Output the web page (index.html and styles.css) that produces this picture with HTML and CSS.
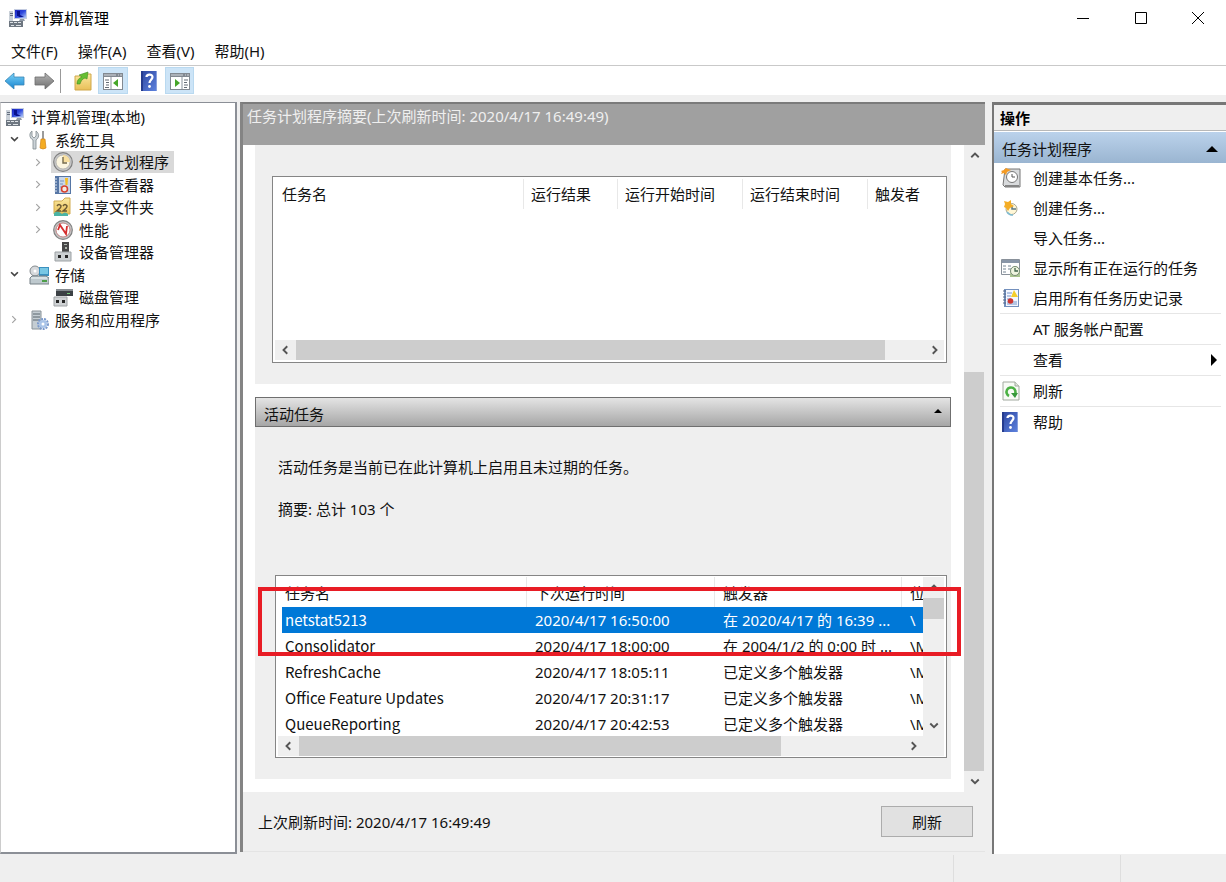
FILE: index.html
```html
<!DOCTYPE html>
<html lang="zh-CN">
<head>
<meta charset="utf-8">
<title>计算机管理</title>
<link rel="stylesheet" href="styles.css">
</head>
<body>
<svg class="defs" aria-hidden="true">
  <defs>
    <linearGradient id="blueArrow" x1="0" y1="0" x2="0" y2="1"><stop offset="0" stop-color="#7cd3f7"/><stop offset="1" stop-color="#1583cf"/></linearGradient>
    <linearGradient id="greyArrow" x1="0" y1="0" x2="0" y2="1"><stop offset="0" stop-color="#b5b5b5"/><stop offset="1" stop-color="#6f6f6f"/></linearGradient>
    <linearGradient id="screen" x1="0" y1="0" x2="1" y2="1"><stop offset="0" stop-color="#1a24c0"/><stop offset=".5" stop-color="#2f49dd"/><stop offset="1" stop-color="#b8d0f8"/></linearGradient>
    <linearGradient id="book" x1="0" y1="0" x2="1" y2="1"><stop offset="0" stop-color="#2c459f"/><stop offset="1" stop-color="#5e83df"/></linearGradient>
    <linearGradient id="folder" x1="0" y1="0" x2="0" y2="1"><stop offset="0" stop-color="#fbe9a0"/><stop offset="1" stop-color="#e9bf58"/></linearGradient>
  </defs>
  <symbol id="computer" viewBox="0 0 20 20">
    <path d="M6 1h13v10H6z" fill="#c3cbe0"/><path d="M7 2h11v8H7z" fill="url(#screen)"/><path d="M9 3l3 0v5h-3zM12 7l4 2h-6z" fill="#0a128e"/><path d="M12 11h4l1 2h-6z" fill="#8f98a5"/>
    <path d="M1 3h4v11H1z" fill="#c9d0d8"/><path d="M2 5h3v1H2zM2 7h3v1H2z" fill="#657080"/>
    <path d="M1 13h14v6H1z" fill="#6d7680"/><path d="M2 14h3v1H2zM6 14h3v1H6zM10 14h3v1h-3zM3 17h3v1H3zM8 17h5v1H8z" fill="#dce1e5"/>
  </symbol>
  <symbol id="help" viewBox="0 0 20 20">
    <path d="M1 0h16v20H1z" fill="url(#book)"/><path d="M1 0h2v20H1z" fill="#263c8e"/><path d="M16 0h1v20h-1z" fill="#889fdd"/>
    <path d="M6.500 6c0-3 6-3.500 6 0 0 2.500-3 3-3 6" fill="none" stroke="#fff" stroke-width="2.200"/><circle cx="9.500" cy="15.500" r="1.400" fill="#fff"/>
  </symbol>
  <symbol id="clock" viewBox="0 0 20 20">
    <circle cx="10" cy="10" r="9.300" fill="#c9c9c9" stroke="#808080" stroke-width="1.200"/><circle cx="10" cy="10" r="7" fill="#fbf5e0" stroke="#9b9b9b" stroke-width=".6"/><path d="M10 10V3a7 7 0 0 1 7 7z" fill="#f8dfa0"/><path d="M10 5v6h4" fill="none" stroke="#756a4b" stroke-width="1.400"/>
  </symbol>
  <symbol id="log" viewBox="0 0 20 20">
    <path d="M3 1h15v18H3z" fill="#7390bd"/><path d="M5 2h12v16H5z" fill="#f4f7ff"/><path d="M6 5h5M6 8h4M6 11h4M6 14h10M6 16h10" stroke="#7494ca"/><path d="M13 2l4 7h-7z" fill="#f4cd2b"/><circle cx="9.500" cy="13" r="2.800" fill="#ce3632"/><path d="M2 3h3M2 6h3M2 9h3M2 12h3M2 15h3" stroke="#546687"/>
  </symbol>
  <symbol id="event" viewBox="0 0 20 20">
    <path d="M2 1h16v18H2z" fill="#5676a5"/><path d="M6 2h11v16H6z" fill="#c9d7ea"/><path d="M7 6h4M7 9h3M7 12h2" stroke="#7895bd"/><path d="M12 3h3l-.5 7h-2z" fill="#f5bc22"/><circle cx="11.500" cy="14" r="3" fill="#f4e9e4" stroke="#d6422e" stroke-width="1.600"/><path d="M1 4h3M1 7h3M1 10h3M1 13h3M1 16h3" stroke="#dce4ef"/>
  </symbol>
  <symbol id="device" viewBox="0 0 20 20">
    <path d="M9 0h7v11H9z" fill="#474747"/><path d="M11 2h3v1h-3zM12 5h2v2h-2z" fill="#aeb6ac"/><path d="M2 10h16v9H2z" fill="#ccd0d2" stroke="#9da2a5"/><path d="M5 13h3v3H5zM12 13h3v3h-3z" fill="#252525"/>
  </symbol>
</svg>

<header class="titlebar">
  <svg class="icon"><use href="#computer"/></svg>
  <h1>计算机管理</h1>
  <div class="window-buttons">
    <button aria-label="最小化"><svg viewBox="0 0 12 12"><path d="M0 6.500h12"/></svg></button>
    <button aria-label="最大化"><svg viewBox="0 0 12 12"><path d="M.5.5h11v11H.5z"/></svg></button>
    <button aria-label="关闭"><svg viewBox="0 0 12 12"><path d="M0 0l12 12M12 0L0 12"/></svg></button>
  </div>
</header>

<nav class="menubar">
  <button>文件(F)</button><button>操作(A)</button><button>查看(V)</button><button>帮助(H)</button>
</nav>

<div class="toolbar">
  <button aria-label="后退"><svg class="icon" viewBox="0 0 20 20"><path d="M0 10l9-8v4h10v8H9v4z" fill="url(#blueArrow)" stroke="#3a86b5" stroke-width=".8"/></svg></button>
  <button aria-label="前进"><svg class="icon" viewBox="0 0 20 20"><path d="M20 10l-9-8v4H1v8h10v4z" fill="url(#greyArrow)" stroke="#6c6c6c" stroke-width=".8"/></svg></button>
  <span class="divider"></span>
  <button class="up" aria-label="上移一级"><svg class="icon" viewBox="0 0 20 20"><path d="M2 5h7l2-2h7v16H2z" fill="url(#folder)" stroke="#d0a74b"/><path d="M4 13c0-4 2-6 5-7L6 4l9-3-1 7-2-1c-3 1-4 3-5 6z" fill="#67bf32" stroke="#438e23" stroke-width=".6"/></svg></button>
  <button class="pressed" aria-label="显示/隐藏控制台树"><svg class="icon" viewBox="0 0 20 20"><path d="M0 2h20v17H0z" fill="#828991"/><path d="M1 6h18v12H1z" fill="#fff"/><path d="M1 4h12M15 4h1M17 4h2" stroke="#d4d8de"/><path d="M2 9h4M3 11.500h3M3 14h3M2 16.500h4" stroke="#646d76"/><path d="M8 6v12" stroke="#8b949d"/><path d="M15 8v8l-5-4z" fill="#46a629"/></svg></button>
  <button class="help-button" aria-label="帮助"><svg class="icon"><use href="#help"/></svg></button>
  <button class="pressed" aria-label="显示/隐藏操作窗格"><svg class="icon" viewBox="0 0 20 20"><path d="M0 2h20v17H0z" fill="#828991"/><path d="M1 6h18v12H1z" fill="#fff"/><path d="M1 4h12M15 4h1M17 4h2" stroke="#d4d8de"/><path d="M14 9h4M14 11.500h3M14 14h4M14 16.500h3" stroke="#646d76"/><path d="M12 6v12" stroke="#8b949d"/><path d="M5 8v8l5-4z" fill="#46a629"/></svg></button>
</div>

<main class="workspace">
  <aside class="tree">
    <ul>
      <li class="root"><svg class="icon"><use href="#computer"/></svg><span>计算机管理(本地)</span></li>
      <li class="level1"><svg class="twisty open" viewBox="0 0 8 8"><path d="M1 2l3 3 3-3"/></svg><svg class="icon" viewBox="0 0 20 20"><path d="M3 1v5l2 2 2-2V1c4 3 3 7 0 9v9H4v-9C0 8 0 3 3 1z" fill="#ccd3d8" stroke="#818b91" stroke-width=".8"/><path d="M13 1h2v9h-2z" fill="#9b9b9b"/><path d="M12 9h4l1 9q-3 2-6 0z" fill="#f4ac22" stroke="#d28316" stroke-width=".7"/></svg><span>系统工具</span></li>
      <li class="level2 selected"><svg class="twisty" viewBox="0 0 8 8"><path d="M2 1l3 3-3 3"/></svg><span class="label"><svg class="icon"><use href="#clock"/></svg><span>任务计划程序</span></span></li>
      <li class="level2"><svg class="twisty" viewBox="0 0 8 8"><path d="M2 1l3 3-3 3"/></svg><span class="label"><svg class="icon"><use href="#event"/></svg><span>事件查看器</span></span></li>
      <li class="level2"><svg class="twisty" viewBox="0 0 8 8"><path d="M2 1l3 3-3 3"/></svg><span class="label"><svg class="icon" viewBox="0 0 20 20"><path d="M1 4h8l3-3h5v16H1z" fill="url(#folder)" stroke="#d2ab50"/><path d="M4 9q2-3 4 0 0 2-4 5h4M10 9q2-3 4 0 0 2-4 5h4" stroke="#6b5932" stroke-width="1.500" fill="none"/><path d="M1 16q4-3 8 1 3-3 6 0v2H1z" fill="#4bb3a4"/></svg><span>共享文件夹</span></span></li>
      <li class="level2"><svg class="twisty" viewBox="0 0 8 8"><path d="M2 1l3 3-3 3"/></svg><span class="label"><svg class="icon" viewBox="0 0 20 20"><circle cx="10" cy="10" r="9.300" fill="#c5c5c5" stroke="#808080" stroke-width="1.200"/><circle cx="10" cy="10" r="7" fill="#fff" stroke="#ba6d6d" stroke-width=".8"/><path d="M5 10l2-5 6 9 1-8" fill="none" stroke="#d62e2e" stroke-width="1.800"/></svg><span>性能</span></span></li>
      <li class="level2"><span class="twisty"></span><span class="label"><svg class="icon"><use href="#device"/></svg><span>设备管理器</span></span></li>
      <li class="level1"><svg class="twisty open" viewBox="0 0 8 8"><path d="M1 2l3 3 3-3"/></svg><svg class="icon" viewBox="0 0 20 20"><circle cx="6" cy="6" r="5" fill="#d6d9dc" stroke="#858b8e"/><circle cx="6" cy="6" r="1.500" fill="#fff"/><path d="M10 2h10v9H10z" fill="#3a90bf"/><path d="M11 3h8v6h-8z" fill="#78c7e4"/><path d="M1 13l2-2h14l3 2v6H1z" fill="#bec9ce" stroke="#768187"/><path d="M2 13h16" stroke="#f4fafa"/><path d="M13 15h5v2h-5z" fill="#4e9e48"/></svg><span>存储</span></li>
      <li class="level2"><span class="twisty"></span><span class="label"><svg class="icon" viewBox="0 0 20 20"><path d="M3 2h17v7H3z" fill="#3c4145"/><path d="M3 2h17v2H3z" fill="#858b90"/><path d="M14 6h3v1h-3z" fill="#76cb78"/><path d="M1 10h13v9H1z" fill="#cfd2d4" stroke="#9fa3a6"/><path d="M3 13h3v3H3zM9 13h3v3H9z" fill="#252525"/></svg><span>磁盘管理</span></span></li>
      <li class="level1"><svg class="twisty" viewBox="0 0 8 8"><path d="M2 1l3 3-3 3"/></svg><svg class="icon" viewBox="0 0 20 20"><path d="M3 1h9v18H3z" fill="#c4cdd3" stroke="#899298"/><path d="M4 4h7M4 7h7M4 10h7" stroke="#58646c"/><circle cx="14" cy="14" r="5" fill="none" stroke="#7a99cb" stroke-width="2" stroke-dasharray="2 1"/><circle cx="14" cy="14" r="4" fill="#a9c4e8"/><circle cx="14" cy="14" r="1.500" fill="#fff"/></svg><span>服务和应用程序</span></li>
    </ul>
  </aside>

  <section class="summary">
    <h2>任务计划程序摘要(上次刷新时间: 2020/4/17 16:49:49)</h2>
    <div class="scroll-area">
      <div class="panels">
        <div class="panel status-panel">
          <div class="list status-list">
            <table>
              <colgroup><col class="w-name"><col class="w-result"><col class="w-time"><col class="w-time"><col></colgroup>
              <thead><tr><th>任务名</th><th>运行结果</th><th>运行开始时间</th><th>运行结束时间</th><th>触发者</th></tr></thead>
            </table>
            <div class="hscroll"><button aria-label="向左"><svg viewBox="0 0 8 8"><path d="M5 1L2 4l3 3"/></svg></button><div class="track"><div class="thumb wide"></div></div><button aria-label="向右"><svg viewBox="0 0 8 8"><path d="M3 1l3 3-3 3"/></svg></button></div>
          </div>
        </div>
        <button class="band"><span>活动任务</span><svg viewBox="0 0 8 4"><path d="M0 4l4-4 4 4z"/></svg></button>
        <div class="panel active-panel">
          <p>活动任务是当前已在此计算机上启用且未过期的任务。</p>
          <p>摘要: 总计 103 个</p>
          <div class="marked">
            <div class="list active-list">
              <div class="rows">
                <table>
                  <colgroup><col class="a-name"><col class="a-next"><col class="a-trigger"><col></colgroup>
                  <thead><tr><th>任务名</th><th>下次运行时间</th><th>触发器</th><th>位</th></tr></thead>
                  <tbody>
                    <tr class="current"><td>netstat5213</td><td>2020/4/17 16:50:00</td><td>在 2020/4/17 的 16:39 ...</td><td>\</td></tr>
                    <tr><td>Consolidator</td><td>2020/4/17 18:00:00</td><td>在 2004/1/2 的 0:00 时 ...</td><td>\M</td></tr>
                    <tr><td>RefreshCache</td><td>2020/4/17 18:05:11</td><td>已定义多个触发器</td><td>\M</td></tr>
                    <tr><td>Office Feature Updates</td><td>2020/4/17 20:31:17</td><td>已定义多个触发器</td><td>\M</td></tr>
                    <tr><td>QueueReporting</td><td>2020/4/17 20:42:53</td><td>已定义多个触发器</td><td>\M</td></tr>
                  </tbody>
                </table>
                <div class="vscroll"><button aria-label="向上"><svg viewBox="0 0 8 8"><path d="M1 5l3-3 3 3"/></svg></button><div class="track"><div class="thumb"></div></div><button aria-label="向下"><svg viewBox="0 0 8 8"><path d="M1 2l3 3 3-3"/></svg></button></div>
              </div>
              <div class="hscroll cornered"><button aria-label="向左"><svg viewBox="0 0 8 8"><path d="M5 1L2 4l3 3"/></svg></button><div class="track"><div class="thumb"></div></div><button aria-label="向右"><svg viewBox="0 0 8 8"><path d="M3 1l3 3-3 3"/></svg></button></div>
            </div>
            <div class="highlight"></div>
          </div>
        </div>
      </div>
      <div class="vscroll page-scroll"><button aria-label="向上"><svg viewBox="0 0 8 8"><path d="M1 5l3-3 3 3"/></svg></button><div class="track"><div class="thumb"></div></div><button aria-label="向下"><svg viewBox="0 0 8 8"><path d="M1 2l3 3 3-3"/></svg></button></div>
    </div>
    <footer><span>上次刷新时间: 2020/4/17 16:49:49</span><button class="refresh">刷新</button></footer>
  </section>

  <aside class="actions">
    <h2>操作</h2>
    <button class="group"><span>任务计划程序</span><svg viewBox="0 0 12 6"><path d="M0 6l6-6 6 6z"/></svg></button>
    <ul>
      <li><button><svg class="icon" viewBox="0 0 20 20"><path d="M4 1h15v18H4l-2-2z" fill="#d9dbdd" stroke="#777"/><path d="M4 17h14v2H4z" fill="#858585"/><circle cx="11" cy="9" r="5.500" fill="#fff" stroke="#777"/><path d="M11 6v3h3" stroke="#555" fill="none"/><path d="M0 3l3-1 2-2 2 1 3 1-4 2-1 3-2-2-3 1 1-2z" fill="#f59b23"/></svg><span>创建基本任务...</span></button></li>
      <li><button><svg class="icon" viewBox="0 0 20 20"><circle cx="10.500" cy="11" r="5.500" fill="#fff7d7" stroke="#aaa78f"/><path d="M11 8v3h4" stroke="#5c7884" stroke-width="1.500" fill="none"/><path d="M3 3l4 1 3-2v4l3 2-4 2-2 3-2-3-2-1 1-3z" fill="#f4ad26"/><path d="M6 14q2 3 6 3" stroke="#7fbad0" stroke-width="1.500" fill="none"/></svg><span>创建任务...</span></button></li>
      <li><button><span class="icon"></span><span>导入任务...</span></button></li>
      <li><button><svg class="icon" viewBox="0 0 20 20"><path d="M.5 1.500h18v15H.5z" fill="#fff" stroke="#89919a"/><path d="M1 2h17v3H1z" fill="#8996a8"/><path d="M2 8h3M7 8h3M2 11h3M7 11h3M2 14h3" stroke="#758493"/><path d="M9 19q0-11 5-11t5 11z" fill="#a9c48f"/><circle cx="14" cy="13" r="4.500" fill="#eff5df" stroke="#788c76"/><path d="M14 10v3h3" fill="none" stroke="#40634c" stroke-width="1.300"/></svg><span>显示所有正在运行的任务</span></button></li>
      <li><button><svg class="icon"><use href="#log"/></svg><span>启用所有任务历史记录</span></button></li>
      <li class="ruled"><button><span class="icon"></span><span>AT 服务帐户配置</span></button></li>
      <li class="ruled"><button><span class="icon"></span><span>查看</span><svg class="more" viewBox="0 0 6 12"><path d="M0 0l6 6-6 6z"/></svg></button></li>
      <li class="ruled"><button><svg class="icon" viewBox="0 0 20 20"><path d="M2 1h12l4 4v14H2z" fill="#f8fbf6" stroke="#a2aa9f"/><path d="M14 1v4h4" fill="#dfe7dc" stroke="#a2aa9f"/><path d="M8 15a4.500 4.500 0 1 1 6-2" fill="none" stroke="#4bb144" stroke-width="2.600"/><path d="M10 12l7 0-3 5z" fill="#36983a"/></svg><span>刷新</span></button></li>
      <li class="ruled"><button><svg class="icon"><use href="#help"/></svg><span>帮助</span></button></li>
    </ul>
  </aside>
</main>
<div class="statusbar"><span></span><span></span><span></span></div>
</body>
</html>
```
FILE: styles.css
```css
* { box-sizing: border-box; }
body {
  margin: 0;
  min-height: 100vh;
  display: flex;
  flex-direction: column;
  background: #efefef;
  color: #111;
  font: 15px/22px "Noto Sans", "Noto Sans CJK SC", sans-serif;
}
h1, h2, p, ul { margin: 0; padding: 0; font: inherit; }
ul { list-style: none; }
button { border: 0; padding: 0; background: none; color: inherit; font: inherit; text-align: left; }
svg { display: block; flex: none; }
.defs { position: absolute; width: 0; height: 0; }
.icon { width: 20px; height: 20px; flex: none; }

.titlebar { display: flex; align-items: center; gap: 6px; height: 36px; padding-left: 8px; background: #fff; }
.titlebar h1 { flex: 1; color: #000; }
.window-buttons { display: flex; }
.window-buttons button { display: flex; align-items: center; justify-content: center; width: 58px; height: 36px; }
.window-buttons svg { width: 12px; height: 12px; fill: none; stroke: #000; }
.window-buttons button:last-child { width: 56px; }

.menubar { display: flex; gap: 20px; height: 30px; padding: 0 11px; background: #fff; border-bottom: 1px solid #c9c9c9; }

.toolbar { display: flex; align-items: center; height: 29px; padding-left: 5px; background: #fff; }
.toolbar button { display: flex; align-items: center; justify-content: center; width: 20px; height: 27px; }
.toolbar button + button { margin-left: 9px; }
.toolbar .divider { width: 1px; height: 24px; margin: 0 12px 0 6px; background: #999; }
.toolbar .up { margin-left: 0; }
.toolbar .up + .pressed { margin-left: 5px; }
.toolbar .pressed { width: 30px; background: #cce4f7; border: 1px solid #b9d9f0; }
.toolbar .help-button + .pressed { margin-left: 5px; width: 29px; }
.toolbar .help-button { margin-left: 12px; }

.workspace { flex: 1; display: grid; grid-template-columns: 237px minmax(0, 1fr) 234px; margin-top: 7px; }
.tree { background: #fff; border: solid #8b8f96; border-width: 1px 2px 2px 1px; border-left-color: #ccc; padding-top: 3px; }
.tree ul { display: grid; grid-template-rows: repeat(10, 1fr); height: 225px; }
.tree li { display: flex; align-items: center; min-height: 0; }
.tree .root { padding-left: 4px; gap: 6px; }
.tree .level1 { padding-left: 9px; }
.tree .level1 .icon { margin: 0 6px 0 10px; }
.tree .level2 { padding-left: 33px; }
.tree .label { display: flex; align-items: center; gap: 6px; margin-left: 8px; padding: 0 5px 0 2px; }
.selected .label { background: #d9d9d9; }
.twisty { width: 9px; height: 9px; flex: none; fill: none; stroke: #a2a2a2; }
.twisty.open { stroke: #444; stroke-width: 1.500; }

.summary { display: flex; flex-direction: column; margin: 0 7px 2px 3px; border-left: 3px solid #848484; border-top: 2px solid #7b7b7b; }
.summary h2 { height: 41px; padding: 1px 4px; background: #a0a0a0; color: #efefef; }
.scroll-area { flex: 1; display: flex; background: #fff; }
.panels { flex: 1; min-width: 0; padding: 0 13px 13px 12px; }
.panel { background: #efefef; }
.status-panel { height: 239px; padding: 31px 4px 21px 17px; }
.list { display: flex; flex-direction: column; background: #fff; border: 1px solid #858585; padding: 2px; }
.status-list { height: 187px; }
.status-list table { margin-bottom: auto; }
table { border-collapse: collapse; table-layout: fixed; width: 100%; }
th, td { padding: 0 0 0 7px; font-weight: 400; text-align: left; white-space: nowrap; overflow: hidden; }
th { box-shadow: inset -1px 0 #e8e8e8; }
th:last-child { box-shadow: none; }
.status-list th { height: 30px; }
.w-name { width: 249px; }
.w-result { width: 94px; }
.w-time { width: 125px; }

.hscroll { display: flex; height: 20px; flex: none; background: #efefef; }
.vscroll { display: flex; flex-direction: column; width: 21px; background: #efefef; flex: none; }
.hscroll button, .vscroll button { display: flex; align-items: center; justify-content: center; width: 21px; height: 21px; flex: none; }
.hscroll button { height: 20px; }
.hscroll svg, .vscroll svg { width: 10px; height: 10px; fill: none; stroke: #555; stroke-width: 1.500; }
.cornered { padding-right: 21px; }
.track { flex: 1; min-width: 0; }
.thumb { background: #cdcdcd; }
.hscroll .thumb { height: 100%; width: 80%; }
.hscroll .thumb.wide { width: 94%; }
.page-scroll .track { display: flex; align-items: flex-end; }
.page-scroll .thumb { width: 20px; height: 66%; }
.rows .vscroll .thumb { height: 21px; }

.band { display: flex; align-items: center; justify-content: space-between; width: 100%; height: 30px; margin-top: 13px; padding: 4px 8px 0; border: 1px solid #6f6f6f; background: linear-gradient(#e4e4e4, #a6a6a6); }
.band svg { width: 8px; height: 4px; margin-bottom: 6px; }
.active-panel { padding: 29px 4px 21px 20px; }
.active-panel p { padding-left: 3px; margin-bottom: 20px; }
.marked { position: relative; margin-top: 55px; }
.active-list { height: 183px; padding-top: 1px; }
.rows { display: flex; height: 159px; flex: none; overflow: hidden; }
.active-list table { flex: 1; width: 0; margin-left: 4px; }
.active-list th { height: 30px; padding-top: 2px; }
.active-list td { height: 26px; }
.active-list th, .active-list td { padding-left: 8px; }
.active-list th:first-child, .active-list td:first-child { padding-left: 3px; }
.active-list td:first-child { font-family: "Noto Sans CJK SC", sans-serif; }
.a-name { width: 245px; }
.a-next { width: 188px; }
.a-trigger { width: 187px; }
.current { background: #0078d7; color: #fff; }
.highlight { position: absolute; inset: 12px -14px 102px -17px; border: 4px solid #e81c25; }

.summary footer { display: flex; align-items: center; justify-content: space-between; height: 60px; padding: 0 12px 0 15px; border-bottom: 1px solid #e4e4e4; }
.refresh { width: 92px; height: 31px; border: 1px solid #acacac; background: #e1e1e1; text-align: center; }

.actions { background: #fff; border-left: 2px solid #777; border-top: 3px solid #777; }
.actions h2 { height: 26px; padding: 2px 6px; background: #efefef; border-bottom: 1px solid #b8b8b8; color: #000; font-weight: 700; }
.group { display: flex; align-items: center; justify-content: space-between; width: 100%; height: 31px; padding: 2px 8px 0; margin-top: 1px; background: linear-gradient(#bbd2eb, #9ab5d1); }
.group svg { width: 12px; height: 6px; }
.actions ul { padding: 0 5px 0 6px; }
.actions li button { display: flex; align-items: center; gap: 12px; width: 100%; height: 30px; padding-left: 1px; }
.ruled { border-top: 1px solid #e6e6e6; }
.more { width: 6px; height: 12px; margin: 0 4px 0 auto; }

.statusbar { display: grid; grid-template-columns: 1fr 167px 106px; height: 28px; padding-top: 1px; }
.statusbar span + span { border-left: 1px solid #dedede; }
```
